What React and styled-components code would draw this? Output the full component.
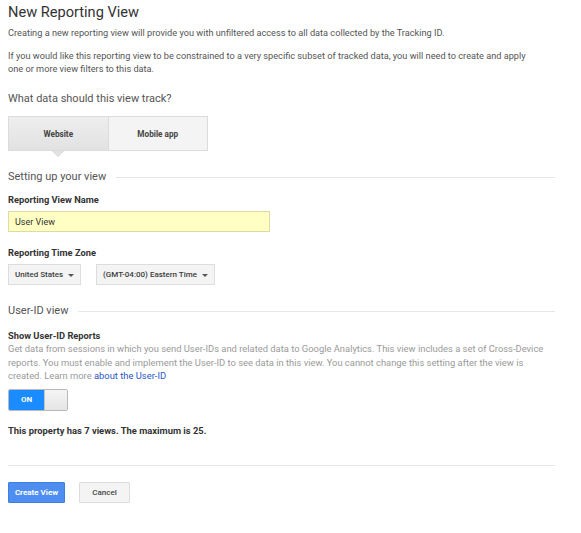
import React from "react";
import styled, { createGlobalStyle } from "styled-components";

const Global = createGlobalStyle`
  html, body { margin: 0; padding: 0; background: #fff; }
  body { font-family: Roboto, "Liberation Sans", Arial, sans-serif; color: #333; }
`;

const Page = styled.div`
  width: 547px;
  padding: 3px 0 0 8px;
  display: flex;
  flex-direction: column;
`;

const Title = styled.h1`
  margin: 0;
  font-size: 14.6px;
  line-height: 18px;
  font-weight: 400;
  color: #333;
`;

const Para = styled.p`
  margin: ${(p) => p.$mt || 0}px 0 0;
  max-width: 527px;
  font-size: 9.2px;
  line-height: 13px;
  color: #555;
`;

const Heading = styled.h2`
  margin: ${(p) => p.$mt || 0}px 0 0;
  font-size: 11px;
  line-height: 14px;
  font-weight: 400;
  color: #555;
`;

const SectionHead = styled.div`
  margin-top: ${(p) => p.$mt || 0}px;
  display: flex;
  align-items: center;
  gap: 10px;
  font-size: 11px;
  line-height: 14px;
  color: #555;
  &::after {
    content: "";
    flex: 1;
    height: 1px;
    background: #e6e6e6;
  }
`;

const Tabs = styled.div`
  margin-top: 10px;
  display: flex;
  width: 200px;
  height: 35px;
`;

const Tab = styled.div`
  position: relative;
  flex: 1;
  display: flex;
  align-items: center;
  justify-content: center;
  font-size: 8.2px;
  font-weight: 700;
  color: #444;
  border: 1px solid #dcdcdc;
  background: ${(p) =>
    p.$active ? "linear-gradient(#eeeeee, #e2e2e2)" : "#f4f4f4"};
  & + & { border-left: none; }
  ${(p) =>
    p.$active &&
    `
    &::after {
      content: "";
      position: absolute;
      left: 50%;
      bottom: -6px;
      margin-left: -5px;
      border-left: 5px solid transparent;
      border-right: 5px solid transparent;
      border-top: 5px solid #e2e2e2;
    }
    &::before {
      content: "";
      position: absolute;
      left: 50%;
      bottom: -7px;
      margin-left: -6px;
      border-left: 6px solid transparent;
      border-right: 6px solid transparent;
      border-top: 6px solid #d6d6d6;
    }
  `}
`;

const Label = styled.div`
  margin-top: ${(p) => p.$mt || 0}px;
  font-size: 9.3px;
  line-height: 12px;
  font-weight: 700;
  color: #333;
`;

const TextInput = styled.div`
  margin-top: 5px;
  width: 262px;
  height: 21px;
  box-sizing: border-box;
  border: 1px solid #dcdca0;
  background: #ffffc4;
  display: flex;
  align-items: center;
  padding-left: 6px;
  font-size: 9px;
  color: #333;
`;

const SelectRow = styled.div`
  margin-top: 5px;
  display: flex;
  gap: 15px;
`;

const Select = styled.div`
  height: 21px;
  box-sizing: border-box;
  border: 1px solid #dddddd;
  background: #f4f4f4;
  display: flex;
  align-items: center;
  gap: 5px;
  padding: 0 6px 0 6px;
  font-size: 8px;
  font-weight: 500;
  color: #3c3c3c;
  &::after {
    content: "";
    border-left: 3px solid transparent;
    border-right: 3px solid transparent;
    border-top: 3px solid #555;
    margin-top: 1px;
  }
`;

const Desc = styled.p`
  margin: 0;
  max-width: 542px;
  font-size: 9.4px;
  line-height: 13.5px;
  color: #9a9a9a;
  a { color: #2a56c6; text-decoration: none; }
`;

const Toggle = styled.div`
  margin-top: 6px;
  width: 60px;
  height: 22px;
  box-sizing: border-box;
  border: 1px solid #b9b9b9;
  border-radius: 2px;
  display: flex;
  overflow: hidden;
`;

const ToggleOn = styled.div`
  width: 35px;
  background: #1a8cff;
  color: #fff;
  font-size: 8px;
  font-weight: 700;
  display: flex;
  align-items: center;
  justify-content: center;
`;

const ToggleKnob = styled.div`
  flex: 1;
  background: linear-gradient(#f4f4f4, #e6e6e6);
  border-left: 1px solid #c4c4c4;
`;

const Notice = styled.div`
  margin-top: 14px;
  font-size: 9.4px;
  line-height: 12px;
  font-weight: 700;
  color: #333;
`;

const Divider = styled.hr`
  margin: 28px 0 0;
  border: none;
  height: 1px;
  background: #e6e6e6;
`;

const Buttons = styled.div`
  margin-top: 16px;
  display: flex;
  gap: 14px;
`;

const Button = styled.button`
  height: 21px;
  box-sizing: border-box;
  padding: 0;
  width: ${(p) => p.$w}px;
  font-family: inherit;
  font-size: 8px;
  font-weight: 700;
  border-radius: 1px;
  ${(p) =>
    p.$primary
      ? `background: #4d8ef0; color: #fff; border: 1px solid #3f7fe0;`
      : `background: #f4f4f4; color: #444; border: 1px solid #dcdcdc; font-weight: 500;`}
`;

export default function App() {
  return (
    <>
      <Global />
      <Page>
        <Title>New Reporting View</Title>
        <Para $mt={5}>
          Creating a new reporting view will provide you with unfiltered access to all data collected by the Tracking ID.
        </Para>
        <Para $mt={10}>
          If you would like this reporting view to be constrained to a very specific subset of tracked data, you will need to create and apply one or more view filters to this data.
        </Para>
        <Heading $mt={17}>What data should this view track?</Heading>
        <Tabs>
          <Tab $active>Website</Tab>
          <Tab>Mobile app</Tab>
        </Tabs>
        <SectionHead $mt={19}>Setting up your view</SectionHead>
        <Label $mt={10}>Reporting View Name</Label>
        <TextInput>User View</TextInput>
        <Label $mt={15}>Reporting Time Zone</Label>
        <SelectRow>
          <Select>United States</Select>
          <Select>(GMT-04:00) Eastern Time</Select>
        </SelectRow>
        <SectionHead $mt={19}>User-ID view</SectionHead>
        <Label $mt={12}>Show User-ID Reports</Label>
        <Desc>
          Get data from sessions in which you send User-IDs and related data to Google Analytics. This view includes a set of Cross-Device reports. You must enable and implement the User-ID to see data in this view. You cannot change this setting after the view is created. Learn more <a href="#">about the User-ID</a>
        </Desc>
        <Toggle>
          <ToggleOn>ON</ToggleOn>
          <ToggleKnob />
        </Toggle>
        <Notice>This property has 7 views. The maximum is 25.</Notice>
        <Divider />
        <Buttons>
          <Button $primary $w={57}>Create View</Button>
          <Button $w={51}>Cancel</Button>
        </Buttons>
      </Page>
    </>
  );
}
